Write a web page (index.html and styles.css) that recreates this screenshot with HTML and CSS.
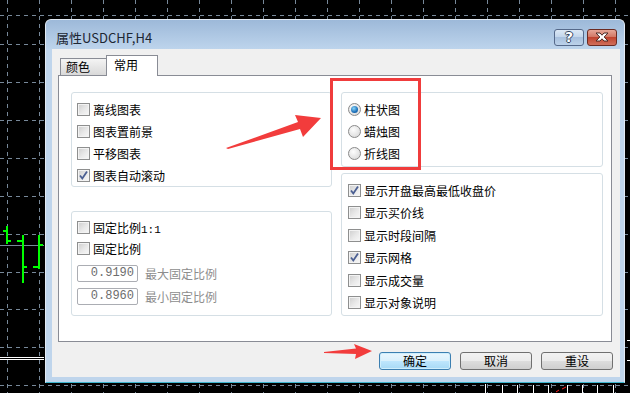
FILE: index.html
```html
<!DOCTYPE html>
<html lang="zh-CN">
<head>
  <meta charset="UTF-8">
  <title>属性USDCHF,H4</title>
  <link rel="stylesheet" href="styles.css">
</head>
<body>
  <!-- chart behind the dialog -->
  <svg class="chart" width="630" height="393" viewBox="0 0 630 393">
    <path class="grid" d="M7.5 0V393M39.5 0V393M71.5 0V393M103.5 0V393M135.5 0V393M167.5 0V393M199.5 0V393M231.5 0V393M263.5 0V393M295.5 0V393M327.5 0V393M359.5 0V393M391.5 0V393M423.5 0V393M455.5 0V393M487.5 0V393M519.5 0V393M551.5 0V393M583.5 0V393M615.5 0V393"/>
    <path class="grid" d="M0 15.5H630M0 44.5H630M0 82.5H630M0 120.5H630M0 158.5H630M0 196.5H630M0 234.5H630M0 272.5H630M0 309.5H630M0 347.5H630M0 385.5H630"/>
    <path d="M0 245.5H44" stroke="#778899" stroke-width="1"/>
    <path d="M0 357.5H44M0 359.5H44" stroke="#fff" stroke-width="1"/>
    <g stroke="#00ff00" stroke-width="2" fill="none">
      <path d="M7 226V244M3 231H7M7 241H11"/>
      <path d="M23 235V283M17 241H23M23 267H27"/>
      <path d="M39 235V269M33 267H39M39 245H43"/>
    </g>
    <g stroke="#fff" stroke-width="1">
      <path d="M485.5 384V393M502.5 385V393M517.5 385V393M533.5 385V393M548.5 385V393M567.5 385V393M582.5 385V393M597.5 385V393M613.5 385V393"/>
      <path d="M627 340.5H630M627 360.5H630"/>
    </g>
    <path d="M556 392L559 390M562 389L566 387" stroke="#ff2020" stroke-width="1"/>
  </svg>

  <div class="window">
    <div class="titlebar">
      <span class="title">属性USDCHF,H4</span>
      <div class="caption-buttons">
        <span class="cap-btn help">?</span>
        <span class="cap-btn close">
          <svg width="16" height="10" viewBox="0 0 16 10">
            <path d="M2 1H6L8 3.2L10 1H14L10.2 5L14 9H10L8 6.8L6 9H2L5.8 5Z" fill="#fff" stroke="#4a2a26" stroke-width="1"/>
          </svg>
        </span>
      </div>
    </div>

    <div class="client">
      <div class="tabs">
        <span class="tab">颜色</span>
        <span class="tab active">常用</span>
      </div>

      <div class="panel">
        <div class="col">
          <div class="group g-view">
            <div class="row"><span class="check"></span>离线图表</div>
            <div class="row"><span class="check"></span>图表置前景</div>
            <div class="row"><span class="check"></span>平移图表</div>
            <div class="row">
              <span class="check"><svg width="11" height="11" viewBox="0 0 11 11"><path d="M2 5.5L4.3 8.5L9 1.5" fill="none" stroke="#4b5f92" stroke-width="1.8"/></svg></span>图表自动滚动
            </div>
          </div>

          <div class="group g-scale">
            <div class="row"><span class="check"></span><span>固定比例<span class="mono">1:1</span></span></div>
            <div class="row"><span class="check"></span>固定比例</div>
            <div class="field-row">
              <span class="num">0.9190</span>
              <span class="muted">最大固定比例</span>
            </div>
            <div class="field-row">
              <span class="num">0.8960</span>
              <span class="muted">最小固定比例</span>
            </div>
          </div>
        </div>

        <div class="col right">
          <div class="group g-type">
            <div class="row"><span class="radio on"></span>柱状图</div>
            <div class="row"><span class="radio"></span>蜡烛图</div>
            <div class="row"><span class="radio"></span>折线图</div>
          </div>

          <div class="group g-show">
            <div class="row">
              <span class="check"><svg width="11" height="11" viewBox="0 0 11 11"><path d="M2 5.5L4.3 8.5L9 1.5" fill="none" stroke="#4b5f92" stroke-width="1.8"/></svg></span>显示开盘最高最低收盘价
            </div>
            <div class="row"><span class="check"></span>显示买价线</div>
            <div class="row"><span class="check"></span>显示时段间隔</div>
            <div class="row">
              <span class="check"><svg width="11" height="11" viewBox="0 0 11 11"><path d="M2 5.5L4.3 8.5L9 1.5" fill="none" stroke="#4b5f92" stroke-width="1.8"/></svg></span>显示网格
            </div>
            <div class="row"><span class="check"></span>显示成交量</div>
            <div class="row"><span class="check"></span>显示对象说明</div>
          </div>
        </div>
      </div>

      <div class="buttons">
        <button class="btn default">确定</button>
        <button class="btn">取消</button>
        <button class="btn">重设</button>
      </div>
    </div>
  </div>

  <!-- annotations drawn over the screenshot -->
  <div class="highlight"></div>
  <svg class="arrows" width="630" height="393" viewBox="0 0 630 393">
    <path d="M226 148L298 122L295 115L321 118L303 137L300 129L228 149Z" fill="#f23c3c"/>
    <path d="M324 352L356 348.5L354 344L372 351L355 359L356 354L324 353Z" fill="#f23c3c"/>
  </svg>
</body>
</html>
```

FILE: styles.css
```css
* {
  margin: 0;
  padding: 0;
  box-sizing: border-box;
}
body {
  width: 630px;
  height: 393px;
  background: #000;
  position: relative;
  overflow: hidden;
  font-family: "Noto Sans CJK SC", "Microsoft YaHei", sans-serif;
  font-size: 12px;
  color: #000;
}
.chart,
.arrows {
  position: absolute;
  left: 0;
  top: 0;
}
.chart .grid {
  stroke: #778899;
  stroke-width: 1;
  stroke-dasharray: 4 4;
  fill: none;
}
.arrows {
  pointer-events: none;
}

/* dialog window */
.window {
  position: absolute;
  left: 45px;
  top: 19px;
  width: 580px;
  height: 364px;
  display: flex;
  flex-direction: column;
  background: #bfd5ec;
  border: 1px solid #e2eaf4;
  border-bottom-color: #3db5ce;
  border-radius: 6px 6px 0 0;
}
.titlebar {
  height: 29px;
  flex-shrink: 0;
  display: flex;
  align-items: center;
  justify-content: space-between;
  padding: 5px 7px 0 10px;
  background: linear-gradient(#9db9d9, #bdd4ec);
  border-radius: 5px 5px 0 0;
}
.title {
  font-size: 13px;
  color: #1c2633;
}
.caption-buttons {
  display: flex;
  gap: 3px;
}
.cap-btn {
  width: 30px;
  height: 17px;
  border: 1px solid #55698a;
  border-radius: 3px;
  display: flex;
  align-items: center;
  justify-content: center;
}
.help {
  background: linear-gradient(#dce8f5 0, #c3d6eb 45%, #a8c0de 50%, #bcd2ea 100%);
  font-family: "DejaVu Sans", sans-serif;
  font-weight: bold;
  font-size: 14px;
  color: #fff;
  text-shadow: 1px 0 #34465e, -1px 0 #34465e, 0 1px #34465e, 0 -1px #34465e;
}
.close {
  border-color: #6b2b22;
  background: linear-gradient(#e6a798 0, #d27866 45%, #c0442f 50%, #d06f5b 100%);
}

.client {
  flex: 1;
  margin: 0 4px 5px 6px;
  background: #f0f0f0;
  padding-top: 6px;
  display: flex;
  flex-direction: column;
}

/* tabs */
.tabs {
  display: flex;
  align-items: flex-end;
  height: 20px;
  margin-left: 8px;
}
.tab {
  height: 17px;
  width: 47px;
  border: 1px solid #898c95;
  border-bottom: 0;
  padding-left: 5px;
  line-height: 16px;
  background: linear-gradient(#f4f4f4, #e6e6e6 50%, #d9d9d9);
}
.tab.active {
  height: 21px;
  width: 52px;
  margin-left: -1px;
  margin-bottom: -1px;
  padding-left: 7px;
  line-height: 18px;
  background: #fff;
  position: relative;
  z-index: 1;
}

.panel {
  margin: 0 8px 0 6px;
  height: 267px;
  background: #fff;
  border: 1px solid #898c95;
  display: grid;
  grid-template-columns: 261px 262px;
  column-gap: 9px;
  align-content: start;
  padding: 16px 0 0 12px;
}
.col {
  display: flex;
  flex-direction: column;
  gap: 24px;
}
.col.right {
  gap: 6px;
}
.group {
  border: 1px solid #d5dfe5;
  border-radius: 3px;
  padding: 5px 0 0 5px;
}
.g-view { height: 95px; }
.g-scale { height: 105px; }
.g-type { height: 75px; padding-left: 6px; }
.g-show { height: 143px; padding-left: 6px; }

.row {
  display: flex;
  align-items: center;
  gap: 3px;
  height: 22px;
  white-space: nowrap;
}
.g-show .row { height: 22.5px; }
.g-scale .row { height: 21px; }

.check {
  width: 13px;
  height: 13px;
  flex-shrink: 0;
  border: 1px solid #8e8f8f;
  background: linear-gradient(135deg, #cdcdcd 0%, #e9e9e9 55%, #f8f8f8 100%);
  box-shadow: inset 0 0 0 1px #f3f3f3;
  display: flex;
  align-items: center;
  justify-content: center;
}
.radio {
  width: 13px;
  height: 13px;
  flex-shrink: 0;
  border: 1px solid #8a8a8a;
  border-radius: 50%;
  background: radial-gradient(circle at 40% 35%, #fdfdfd, #d4d4d4);
  display: flex;
  align-items: center;
  justify-content: center;
}
.radio.on::after {
  content: "";
  width: 7px;
  height: 7px;
  border-radius: 50%;
  background: radial-gradient(circle at 40% 35%, #8ad6fa, #1c6fb8 60%, #0d4d8f);
}
.mono {
  font-family: "Liberation Mono", monospace;
  font-size: 11px;
}

.field-row {
  display: flex;
  align-items: center;
  gap: 7px;
  height: 17px;
  margin-top: 6px;
}
.num {
  width: 61px;
  height: 17px;
  border: 1px solid #abadb3;
  border-radius: 2px;
  padding-right: 3px;
  text-align: right;
  font-family: "Liberation Mono", monospace;
  font-size: 12px;
  line-height: 15px;
  color: #6d6d6d;
}
.muted {
  color: #8d8d8d;
}

/* dialog buttons */
.buttons {
  display: flex;
  justify-content: flex-end;
  gap: 9px;
  margin-top: 10px;
  padding-right: 7px;
}
.btn {
  width: 72px;
  height: 18px;
  border: 1px solid #707070;
  border-radius: 3px;
  background: linear-gradient(#f2f2f2 0, #ebebeb 50%, #dddddd 51%, #cfcfcf 100%);
  font-family: inherit;
  font-size: 12px;
  line-height: 16px;
  color: #000;
}
.btn.default {
  border-color: #3c7fb1;
  background: linear-gradient(#eaf6fd 0, #d9f0fc 50%, #bee6fd 51%, #a7d9f5 100%);
  box-shadow: inset 0 0 0 1px #cfeefc;
}

.highlight {
  position: absolute;
  left: 330px;
  top: 78px;
  width: 91px;
  height: 92px;
  border: 3px solid #f03c3c;
}
```
